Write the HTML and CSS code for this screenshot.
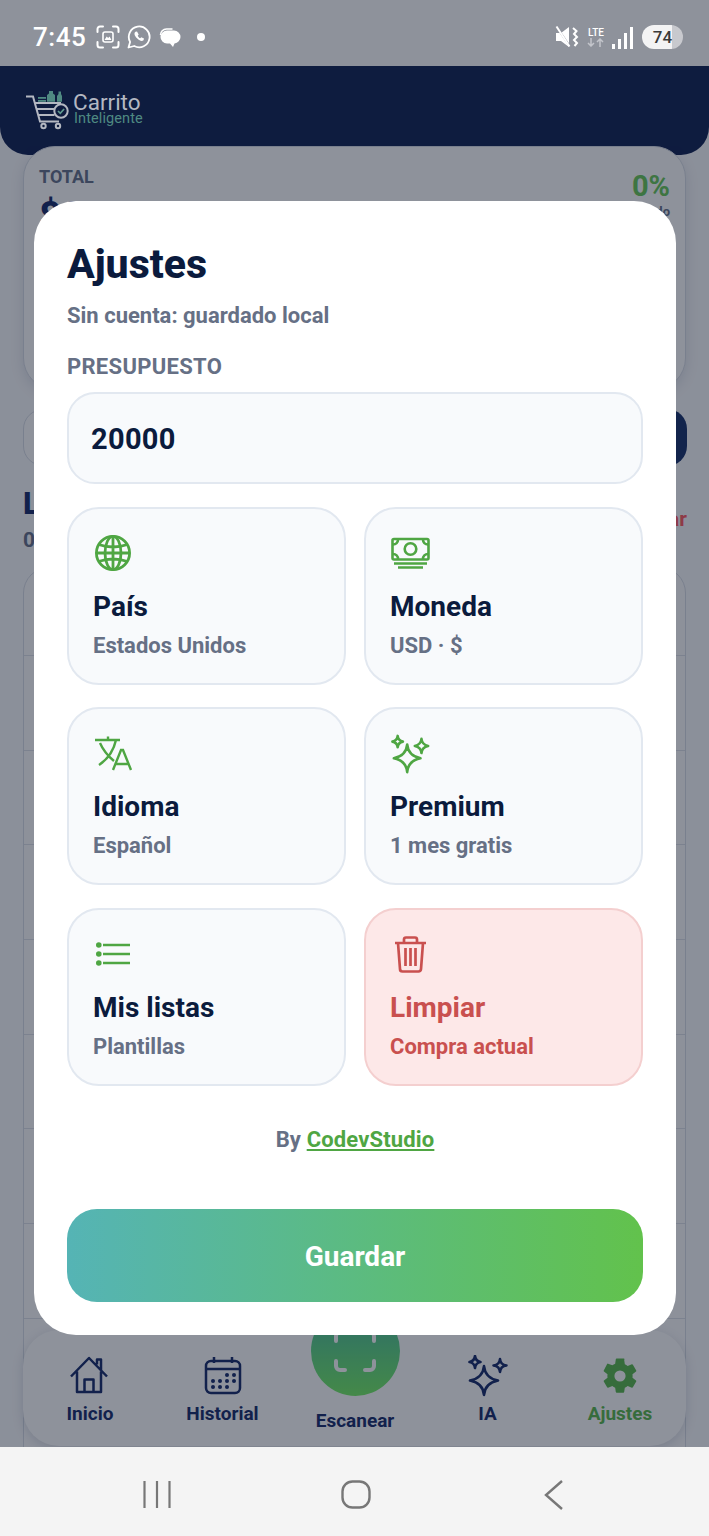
FILE: index.html
```html
<!DOCTYPE html>
<html lang="es">
<head>
<meta charset="utf-8">
<title>Carrito Inteligente</title>
<link rel="stylesheet" href="styles.css">
</head>
<body>
<div class="phone">
  <div class="status">
    <div class="status-left">
      <span class="clock">7:45</span>
      <svg width="24" height="24" viewBox="0 0 24 24" fill="none" stroke="#fff" stroke-width="2" stroke-linecap="round"><path d="M1.500 7V4a2.500 2.500 0 0 1 2.500-2.500h3M17 1.500h3A2.500 2.500 0 0 1 22.500 4v3M22.500 17v3a2.500 2.500 0 0 1-2.500 2.500h-3M7 22.500H4A2.500 2.500 0 0 1 1.500 20v-3"/><rect x="7" y="7" width="10" height="10" rx="2" stroke-width="1.600"/><path d="M8.500 15l2.200-3.500 1.500 1.500 1.300-1.500 2 3.500z" fill="#fff" stroke="none"/></svg>
      <svg width="24" height="24" viewBox="0 0 24 24" fill="none" stroke="#fff" stroke-width="1.800"><path d="M1.500 22.500l1.600-5.600A10.400 10.400 0 1 1 7.200 21z" stroke-linejoin="round"/><path d="M8.500 6.800c-1.500 1-1.500 3.500 1.500 6.500s5 3.300 6.500 2l.5-1.800-2.700-1.300-1.100 1.100c-1-.5-2-1.500-2.500-2.600l1-1.100L10 6.600z" fill="#fff" stroke="none"/></svg>
      <svg class="chat" width="22" height="22" viewBox="0 0 22 22"><path d="M1.500 9a6 6 0 0 1 6-6h6" fill="none" stroke="#fff" stroke-width="1.600"/><path d="M8 4.500h7a6.500 6.500 0 0 1 6.500 6.500 6.500 6.500 0 0 1-6 6.400l-1.500 3.600-3-3.500H8A6.500 6.500 0 0 1 1.500 11 6.500 6.500 0 0 1 8 4.500z" fill="#fff"/></svg>
      <span class="dot"></span>
    </div>
    <div class="status-right">
      <svg width="26" height="24" viewBox="0 0 26 24" fill="#fff"><path d="M1 8h5l8-6v20l-8-6H1z"/><path d="M1 1l15 22" stroke="#8f929d" stroke-width="2"/><path d="M1.500 1.500l13 20" stroke="#fff" stroke-width="2"/><path d="M18 3l3.500 3-2.500 3 3 3-3 3 3 3-2.500 3" fill="none" stroke="#fff" stroke-width="2"/></svg>
      <div class="lte"><span>LTE</span><svg width="20" height="9" viewBox="0 0 20 9" fill="none" stroke="#c3c5cb" stroke-width="1.500"><path d="M5 0v8M2 5l3 3 3-3M14 9V1M11 4l3-3 3 3"/></svg></div>
      <div class="signal"><i class="s1"></i><i class="s2"></i><i class="s3"></i><i class="s4"></i></div>
      <span class="battery">74</span>
    </div>
  </div>

  <header class="top">
    <div class="logo">
      <svg width="46" height="40" viewBox="0 0 46 40" fill="none" stroke="#b4b8c2" stroke-width="2"><path d="M0 6.500h7l7 25h19"/><path d="M9 13h26M11 19h20M12.500 25h16"/><circle cx="17.500" cy="36" r="2.200"/><circle cx="32" cy="36" r="2.200"/><circle cx="35" cy="21" r="6.700" fill="#0e1b3f" stroke="#b4b8c2"/><path d="M32 21l2.300 2.300 3.800-4.300" stroke="#5f9b90" stroke-width="1.700"/><g fill="#4f8a82" stroke="none"><rect x="12" y="7" width="8" height="1.800"/><rect x="12" y="10" width="8" height="1.800"/><path d="M21 11.800V5l2-1.500V1h4v2.500L29 5v6.800z"/><path d="M31 11.800V6l1.500-2V1.500h2.500V4l1 2v5.800z"/></g></svg>
      <div class="brand"><b>Carrito</b><span>Inteligente</span></div>
    </div>
  </header>

  <main class="under">
    <section class="total">
      <div class="total-row">
        <div>
          <div class="total-lab">TOTAL</div>
          <div class="total-val">$0</div>
        </div>
        <div class="pct"><b>0%</b><span>usado</span></div>
      </div>
    </section>
    <div class="search"><div class="search-box"></div><div class="search-btn"></div></div>
    <div class="list-head">
      <div><div class="list-title">Lista</div><div class="list-sub">0 productos</div></div>
      <span class="clear">Borrar</span>
    </div>
    <div class="rows">
      <div class="row"></div><div class="row"></div><div class="row"></div><div class="row"></div><div class="row"></div><div class="row"></div><div class="row"></div><div class="row"></div><div class="row"></div><div class="row"></div>
    </div>
  </main>

  <nav class="tabs">
    <div class="tab">
      <svg width="42" height="42" viewBox="0 0 42 42" fill="none" stroke="#152a6b" stroke-width="2.500" stroke-linejoin="round"><path d="M2 21.500L20 3l18 18.500M8 16.500V37h24V16.500M15.500 37V24.500h9V37M28 9.500V4.500h4v11"/></svg>
      <span>Inicio</span>
    </div>
    <div class="tab">
      <svg width="42" height="42" viewBox="0 0 42 42" fill="none" stroke="#152a6b" stroke-width="2.500"><rect x="4" y="6" width="34" height="32" rx="5"/><path d="M4 14h34M12 2v6M30 2v6"/><g fill="#152a6b" stroke="none"><circle cx="25" cy="20" r="2"/><circle cx="32" cy="20" r="2"/><circle cx="11" cy="26" r="2"/><circle cx="18" cy="26" r="2"/><circle cx="25" cy="26" r="2"/><circle cx="32" cy="26" r="2"/><circle cx="11" cy="32" r="2"/><circle cx="18" cy="32" r="2"/><circle cx="25" cy="32" r="2"/></g></svg>
      <span>Historial</span>
    </div>
    <div class="tab scan">
      <div class="scan-btn"><svg width="44" height="44" viewBox="0 0 44 44" fill="none" stroke="#fff" stroke-width="4" stroke-linecap="round"><path d="M3 12V7a4 4 0 0 1 4-4h5M32 3h5a4 4 0 0 1 4 4v5M41 32v5a4 4 0 0 1-4 4h-5M12 41H7a4 4 0 0 1-4-4v-5"/></svg></div>
      <span>Escanear</span>
    </div>
    <div class="tab">
      <svg width="42" height="42" viewBox="0 0 42 42" fill="none" stroke="#152a6b" stroke-width="2.600" stroke-linejoin="round"><path d="M17 11q1 12 14 14.500Q18 28 17 40 16 28 3 25.500 16 23 17 11zM8 1q.5 5 5.500 6Q8.500 8 8 13 7.500 8 2.500 7 7.500 6 8 1zM33 4q.5 6 6.500 6.500Q33.500 11 33 17q-.5-6-6.500-6.500Q32.500 10 33 4z"/></svg>
      <span>IA</span>
    </div>
    <div class="tab on">
      <svg width="42" height="42" viewBox="0 0 24 24" fill="#5ab84c"><path d="M19.140 12.940c.04-.3.060-.61.060-.94s-.02-.64-.07-.94l2.030-1.580a.49.490 0 0 0 .12-.61l-1.920-3.320a.49.490 0 0 0-.59-.22l-2.390.96c-.5-.38-1.030-.7-1.620-.94l-.36-2.540A.48.480 0 0 0 13.920 2h-3.840a.48.480 0 0 0-.48.41l-.36 2.540c-.59.240-1.130.57-1.620.94l-2.390-.96a.49.490 0 0 0-.59.220L2.720 8.870a.48.480 0 0 0 .12.610l2.030 1.580c-.05.3-.07.62-.07.94s.02.64.07.94l-2.030 1.580a.49.490 0 0 0-.12.61l1.920 3.320c.12.220.37.29.59.220l2.390-.96c.5.38 1.030.7 1.620.94l.36 2.540c.05.24.24.41.48.41h3.840c.24 0 .44-.17.47-.41l.36-2.540c.59-.24 1.130-.56 1.620-.94l2.390.96c.22.080.47 0 .59-.22l1.920-3.320a.48.480 0 0 0-.12-.61zM12 15.200a3.200 3.200 0 1 1 0-6.400 3.200 3.200 0 0 1 0 6.400z"/></svg>
      <span>Ajustes</span>
    </div>
  </nav>

  <div class="scrim"></div>

  <div class="sysnav">
    <svg width="28" height="27" viewBox="0 0 28 27" stroke="#777" stroke-width="2.200"><path d="M1.500 0v27M14 0v27M26.500 0v27"/></svg>
    <svg width="30" height="29" viewBox="0 0 30 29" fill="none" stroke="#777" stroke-width="2.400"><rect x="1.500" y="1.500" width="27" height="26" rx="10"/></svg>
    <svg class="back" width="20" height="30" viewBox="0 0 20 30" fill="none" stroke="#777" stroke-width="2.400"><path d="M18 1L2 15l16 14"/></svg>
  </div>

  <section class="modal">
    <h1>Ajustes</h1>
    <p class="note">Sin cuenta: guardado local</p>
    <div class="label">PRESUPUESTO</div>
    <div class="input">20000</div>
    <div class="grid">
      <div class="card">
        <svg class="ico" width="40" height="40" viewBox="0 0 40 40" fill="none" stroke="#4fa643" stroke-width="2.800"><circle cx="20" cy="19" r="16.600"/><ellipse cx="20" cy="19" rx="8" ry="16.600"/><path d="M20 2.500v33M3.500 19h33M5.500 10.500q14.500 5 29 0M5.500 27.500q14.500-5 29 0"/></svg>
        <h2>País</h2><small>Estados Unidos</small>
      </div>
      <div class="card">
        <svg class="ico" width="40" height="40" viewBox="0 0 40 40" fill="none" stroke="#4fa643" stroke-width="2.600"><rect x="2.500" y="5" width="36" height="20.500" rx="1.500"/><circle cx="20.500" cy="15" r="5.800"/><path d="M3 10.500c3 0 5-2 5-5M38 10.500c-3 0-5-2-5-5M3 20c3 0 5 2 5 5M38 20c-3 0-5 2-5 5M4 29.500h33M8 33.500h25"/></svg>
        <h2>Moneda</h2><small>USD · $</small>
      </div>
      <div class="card">
        <svg class="ico" width="40" height="40" viewBox="0 0 40 40" fill="none" stroke="#4fa643" stroke-width="2.400"><path d="M2 6h25M15 2.500V6M23 6c-2 9-8 19-17 25M7 9c3 7 8 13 14 18M20 36l8-20h2l8 20M23 30h12"/></svg>
        <h2>Idioma</h2><small>Español</small>
      </div>
      <div class="card">
        <svg class="ico" width="42" height="42" viewBox="0 0 42 42" fill="none" stroke="#4fa643" stroke-width="2.700" stroke-linejoin="round"><path d="M17 11q1 12 14 14.500Q18 28 17 40 16 28 3 25.500 16 23 17 11zM7 2q.5 5 5.500 6Q7.500 9 7 14 6.500 9 1.500 8 6.500 7 7 2zM32 5q.5 6 7 7.500-6.500 1-7 7.500-.5-6.500-7-7.500 6.500-1.500 7-7.500z"/></svg>
        <h2>Premium</h2><small>1 mes gratis</small>
      </div>
      <div class="card low">
        <svg class="ico" width="40" height="40" viewBox="0 0 40 40" fill="none" stroke="#4fa643" stroke-width="2.600"><path d="M10 10h27M10 19h27M10 28h27"/><g fill="#4fa643" stroke="none"><circle cx="5.800" cy="10" r="2.800"/><circle cx="5.800" cy="19" r="2.800"/><circle cx="5.800" cy="28" r="2.800"/></g></svg>
        <h2>Mis listas</h2><small>Plantillas</small>
      </div>
      <div class="card low danger">
        <svg class="ico" width="40" height="40" viewBox="0 0 40 40" fill="none" stroke="#c9504f" stroke-width="2.700" stroke-linejoin="round"><path d="M5 8h31M14 8V4.500A2 2 0 0 1 16 2.500h9a2 2 0 0 1 2 2V8M8 8l2 26a2.500 2.500 0 0 0 2.500 2.500h16A2.500 2.500 0 0 0 31 34l2-26M15.500 13v18M20.500 13v18M25.500 13v18"/></svg>
        <h2>Limpiar</h2><small>Compra actual</small>
      </div>
    </div>
    <div class="by">By <a>CodevStudio</a></div>
    <button class="save">Guardar</button>
  </section>
</div>
</body>
</html>
```

FILE: styles.css
```css
* { box-sizing: border-box; }
html, body { margin: 0; padding: 0; }
body { font-family: Roboto, "Liberation Sans", sans-serif; background: #fff; }
.phone { position: relative; width: 709px; height: 1536px; overflow: hidden; background: #fafbfd; display: flex; flex-direction: column; }

.status { height: 66px; background: #fff; display: flex; justify-content: space-between; align-items: center; padding: 8px 26px 0 33px; }
.status-left, .status-right { display: flex; align-items: center; position: relative; z-index: 5; }
.status-left { gap: 7px; }
.status-right { gap: 5px; }
.clock { color: #fff; font-size: 26px; font-weight: 500; letter-spacing: .5px; margin-right: 3px; }
.chat { margin-left: 1px; }
.dot { width: 8px; height: 8px; border-radius: 50%; background: #fff; margin-left: 9px; }
.lte { display: flex; flex-direction: column; align-items: center; color: #fff; font-size: 10px; font-weight: 500; line-height: 11px; }
.signal { display: flex; align-items: flex-end; gap: 3px; height: 23px; margin-left: 1px; }
.signal i { width: 3px; background: #fff; display: block; }
.s1 { height: 5px; } .s2 { height: 10px; } .s3 { height: 16px; } .s4 { height: 22px; }
.battery { width: 41px; height: 24px; margin-left: 4px; border-radius: 12px; background: linear-gradient(90deg, #f3f3f4 74%, #c8c9ce 74%); color: #3a3a3a; font-size: 17px; font-weight: 500; text-align: center; line-height: 24px; }

.top { height: 89px; background: #0f2052; border-radius: 0 0 28px 28px; padding: 24px 0 0 26px; }
.logo { position: relative; z-index: 3; display: flex; align-items: flex-start; gap: 1px; }
.brand { display: flex; flex-direction: column; margin-top: 1px; }
.brand b { color: #b4b8c2; font-size: 22.500px; font-weight: 400; line-height: 22px; }
.brand span { color: #4f8a82; font-size: 14.500px; font-weight: 400; line-height: 12px; margin-left: 1px; letter-spacing: .1px; }

.under { flex: 1; margin-top: -9px; padding: 0 23px; min-height: 0; overflow: hidden; }
.total { height: 244px; background: #fff; border: 1px solid #d8dde6; border-radius: 32px; padding: 19px 15px; box-shadow: 0 4px 14px rgba(15,28,64,.12); }
.total-row { display: flex; justify-content: space-between; }
.total-lab { font-size: 18px; font-weight: 700; color: #64708a; }
.total-val { font-size: 38px; font-weight: 800; color: #152a6b; margin-top: 7px; }
.pct { text-align: right; display: flex; flex-direction: column; margin-top: 3px; }
.pct b { font-size: 29px; color: #68c858; }
.pct span { font-size: 13px; font-weight: 700; color: #64708a; margin-top: 1px; }
.search { height: 57px; margin: 19px -1px 0 0; display: flex; gap: 12px; }
.search-box { flex: 1; border: 1px solid #d8dde6; border-radius: 20px; background: #fff; }
.search-btn { width: 64px; border-radius: 20px; background: #15306b; }
.list-head { display: flex; justify-content: space-between; margin-top: 21px; margin-right: -1px; }
.list-title { font-size: 31px; font-weight: 800; color: #152a6b; line-height: 34px; }
.list-sub { font-size: 21px; font-weight: 700; color: #64708a; line-height: 22px; margin-top: 8px; }
.clear { color: #ff5a60; font-size: 21px; font-weight: 700; line-height: 24px; margin-top: 20px; }
.rows { margin-top: 16px; border: 1px solid #d8dde6; border-radius: 26px; background: #fdfdfe; }
.row { height: 94.700px; border-bottom: 1px solid #dde1e8; }
.row:first-child { height: 88px; }

.tabs { position: absolute; left: 23px; right: 23px; top: 1330px; height: 116px; border-radius: 36px; background: #fff; box-shadow: 0 3px 12px rgba(15,28,64,.15); display: flex; justify-content: space-between; padding: 0 20px 0 21px; }
.tab { width: 92px; display: flex; flex-direction: column; align-items: center; padding-top: 25px; color: #152a6b; font-size: 19px; font-weight: 700; gap: 6px; }
.tab span { line-height: 22px; }
.tab.on { color: #5ab84c; }
.tab.scan { justify-content: flex-end; padding-bottom: 14px; gap: 0; position: relative; }
.scan-btn { position: absolute; top: -24px; width: 89px; height: 90px; border-radius: 50%; background: linear-gradient(180deg, #48bba1, #74ee64); display: flex; align-items: center; justify-content: center; }

.scrim { position: absolute; left: 0; right: 0; top: 0; bottom: 0; background: rgba(15,23,42,.47); z-index: 2; }
.sysnav { position: absolute; left: 0; right: 0; bottom: 0; height: 89px; background: #f4f4f4; z-index: 3; display: flex; align-items: center; gap: 170px; padding: 6px 0 0 143px; }
.back { margin-left: 3px; }

.modal { position: absolute; left: 34px; top: 201px; width: 642px; height: 1134px; background: #fff; border-radius: 42px; padding: 38px 33px 33px; z-index: 4; display: flex; flex-direction: column; }
h1 { margin: 0; font-size: 41px; font-weight: 800; color: #0b1b3d; line-height: 50px; }
.note { margin: 13px 0 0; font-size: 22px; font-weight: 700; color: #667085; line-height: 28px; }
.label { margin-top: 23px; font-size: 22px; font-weight: 700; color: #667085; line-height: 28px; letter-spacing: .3px; }
.input { margin-top: 11px; height: 92px; border: 2px solid #e2e8f0; border-radius: 28px; background: #f8fafc; padding: 0 22px; font-size: 29px; font-weight: 700; color: #0b1b3d; line-height: 90px; letter-spacing: .3px; }
.grid { margin-top: 23px; display: grid; grid-template-columns: 279px 279px; column-gap: 18px; row-gap: 22px; }
.card { height: 178px; border: 2px solid #e2e8f0; border-radius: 32px; background: #f8fafc; padding: 25px 24px 0; display: flex; flex-direction: column; }
.card.low { margin-top: 1px; }
.ico { display: block; height: 40px; overflow: visible; }
h2 { margin: 15px 0 0; font-size: 28px; font-weight: 700; color: #0b1b3d; line-height: 36px; }
small { margin-top: 7px; font-size: 22px; font-weight: 700; color: #667085; line-height: 28px; }
.danger { background: #fde8e8; border-color: #f4cfcf; }
.danger h2, .danger small { color: #c9504f; }
.by { margin-top: 40px; text-align: center; font-size: 22px; font-weight: 700; color: #667085; line-height: 28px; letter-spacing: .15px; }
.by a { color: #4fa643; text-decoration: underline; }
.save { margin-top: 55px; height: 93px; border: 0; border-radius: 30px; padding-top: 3px; background: linear-gradient(90deg, #55b4b5, #62c24c); color: #fff; font: 700 28px Roboto, sans-serif; }
```
